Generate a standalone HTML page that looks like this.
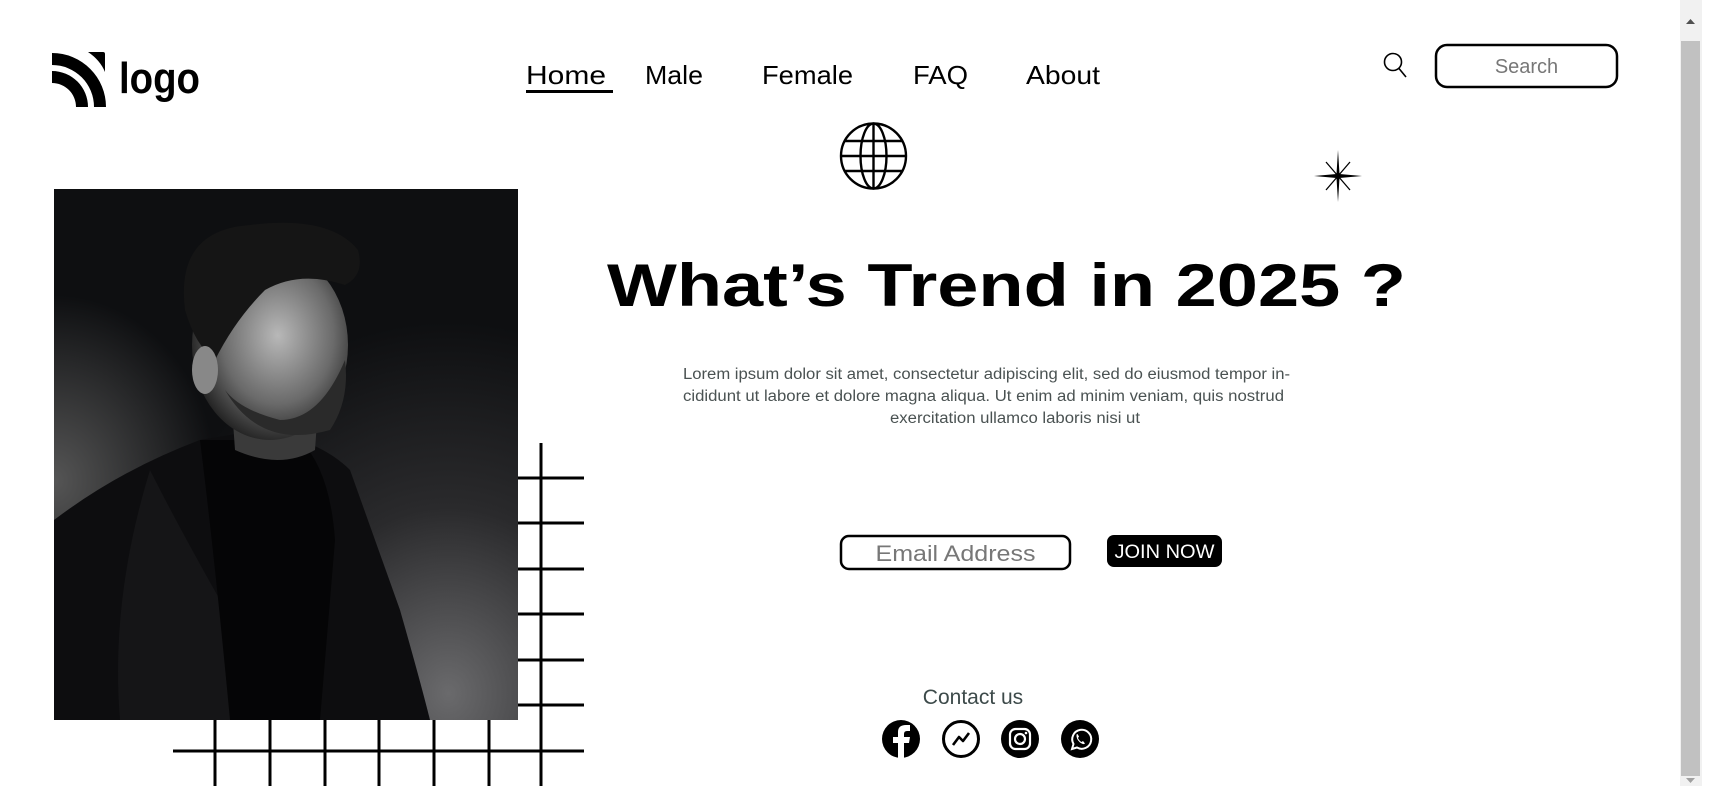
<!DOCTYPE html>
<html><head><meta charset="utf-8"><style>
html,body{margin:0;padding:0;width:1722px;height:786px;overflow:hidden;background:#fff;font-family:"Liberation Sans",sans-serif}
.abs{position:absolute}
</style></head><body>
<svg class="abs" style="left:0;top:0" width="1722" height="786" viewBox="0 0 1722 786" xmlns="http://www.w3.org/2000/svg">
<defs>
<radialGradient id="bg" cx="0.85" cy="0.95" r="0.7">
<stop offset="0" stop-color="#6a6a6c"/><stop offset="0.5" stop-color="#2a2a2c"/><stop offset="1" stop-color="#0e0f11"/>
</radialGradient>
<radialGradient id="bg2" cx="0" cy="0.55" r="0.35">
<stop offset="0" stop-color="#555"/><stop offset="1" stop-color="#555" stop-opacity="0"/>
</radialGradient>
<radialGradient id="face" cx="0.55" cy="0.45" r="0.6">
<stop offset="0" stop-color="#b8b8b8"/><stop offset="0.6" stop-color="#6a6a6a"/><stop offset="1" stop-color="#1a1a1a"/>
</radialGradient>
<clipPath id="ph"><rect x="54" y="189" width="464" height="531"/></clipPath>
</defs>

<!-- logo -->
<g fill="#000">
<path d="M52 53 A54 54 0 0 1 106 107 L94 107 A42 42 0 0 0 52 65Z"/>
<path d="M52 71 A36 36 0 0 1 88 107 L76 107 A24 24 0 0 0 52 83Z"/>
<path d="M88 52 L103 52 Q105 52 105 54 L105 72 Q100 60 88 52Z"/>
</g>
<text x="119" y="93" font-family="Liberation Sans" font-weight="700" font-size="44" textLength="81" lengthAdjust="spacingAndGlyphs">logo</text>

<!-- nav -->
<g font-family="Liberation Sans" font-size="26" fill="#000">
<text x="526" y="84" textLength="80" lengthAdjust="spacingAndGlyphs">Home</text>
<text x="645" y="84" textLength="58" lengthAdjust="spacingAndGlyphs">Male</text>
<text x="762" y="84" textLength="91" lengthAdjust="spacingAndGlyphs">Female</text>
<text x="913" y="84" textLength="55" lengthAdjust="spacingAndGlyphs">FAQ</text>
<text x="1026" y="84" textLength="74" lengthAdjust="spacingAndGlyphs">About</text>
</g>
<rect x="526" y="90" width="87" height="3" fill="#000"/>

<!-- search -->
<circle cx="1393" cy="62" r="8.5" fill="none" stroke="#000" stroke-width="1.6"/>
<line x1="1399" y1="68.5" x2="1406" y2="77" stroke="#000" stroke-width="1.6"/>
<rect x="1436" y="45" width="181" height="42" rx="11" fill="#fff" stroke="#000" stroke-width="2.5"/>
<text x="1526.5" y="73" text-anchor="middle" font-size="20" fill="#777">Search</text>

<!-- scrollbar -->
<rect x="1680" y="0" width="22" height="786" fill="#f1f1f1"/>
<rect x="1681" y="41" width="19" height="735" fill="#c1c1c1"/>
<path d="M1686 24 L1690.5 19 L1695 24Z" fill="#505050"/>
<path d="M1686 778 L1690.5 783 L1695 778Z" fill="#a0a0a0"/>

<!-- globe -->
<g fill="none" stroke="#000" stroke-width="2.4">
<circle cx="873.5" cy="156" r="32.5"/>
<ellipse cx="873.5" cy="156" rx="13" ry="32.5"/>
<line x1="873.5" y1="123.5" x2="873.5" y2="188.5"/>
<line x1="841" y1="156" x2="906" y2="156"/>
<line x1="845" y1="141" x2="902" y2="141"/>
<line x1="845" y1="171" x2="902" y2="171"/>
</g>

<!-- star -->
<path d="M1338 150 L1339.5 174 L1362 176 L1339.5 178 L1338 202 L1336.5 178 L1314 176 L1336.5 174Z" fill="#000"/>
<g stroke="#000" stroke-width="1.3"><line x1="1326" y1="162" x2="1350" y2="190"/><line x1="1350" y1="162" x2="1326" y2="190"/></g>

<!-- photo -->
<g clip-path="url(#ph)">
<rect x="54" y="189" width="464" height="531" fill="url(#bg)"/>
<rect x="54" y="189" width="464" height="531" fill="url(#bg2)"/>
<path d="M54 520 Q120 470 200 440 L260 430 Q320 440 350 470 Q375 540 400 610 Q420 680 430 720 L54 720Z" fill="#0d0d0f"/>
<path d="M150 470 Q175 520 220 600 L250 720 L120 720 Q110 600 150 470Z" fill="#151517"/>
<path d="M200 440 L300 440 Q330 470 335 540 L320 720 L230 720 Q215 560 200 440Z" fill="#050506"/>
<path d="M230 380 L320 380 L315 450 Q280 470 235 450Z" fill="#3a3a3a"/>
<ellipse cx="270" cy="345" rx="78" ry="95" fill="url(#face)"/>
<path d="M225 390 Q260 450 330 430 Q350 400 345 360 Q320 420 280 420 Q240 410 225 390Z" fill="#2a2a2a"/>
<path d="M185 310 Q175 230 250 225 Q330 215 358 250 Q365 275 345 285 Q300 270 265 290 Q235 320 215 360 Q195 345 185 310Z" fill="#151515"/>
<ellipse cx="205" cy="370" rx="13" ry="24" fill="#888"/>
</g>

<!-- grid -->
<g stroke="#000" stroke-width="3">
<line x1="541" y1="443" x2="541" y2="786"/>
<line x1="518" y1="478" x2="584" y2="478"/>
<line x1="518" y1="523" x2="584" y2="523"/>
<line x1="518" y1="569" x2="584" y2="569"/>
<line x1="518" y1="614" x2="584" y2="614"/>
<line x1="518" y1="660" x2="584" y2="660"/>
<line x1="518" y1="705" x2="584" y2="705"/>
<line x1="173" y1="751" x2="584" y2="751"/>
<line x1="215" y1="720" x2="215" y2="786"/>
<line x1="270" y1="720" x2="270" y2="786"/>
<line x1="325" y1="720" x2="325" y2="786"/>
<line x1="379" y1="720" x2="379" y2="786"/>
<line x1="434" y1="720" x2="434" y2="786"/>
<line x1="489" y1="720" x2="489" y2="786"/>
</g>

<!-- heading -->
<text x="607" y="306" font-family="Liberation Sans" font-weight="700" font-size="60" textLength="799" lengthAdjust="spacingAndGlyphs">What’s Trend in 2025 ?</text>

<!-- paragraph -->
<g font-family="Liberation Sans" font-size="15.5" fill="#4a5252">
<text x="683" y="379" textLength="607" lengthAdjust="spacingAndGlyphs">Lorem ipsum dolor sit amet, consectetur adipiscing elit, sed do eiusmod tempor in-</text>
<text x="683" y="401" textLength="601" lengthAdjust="spacingAndGlyphs">cididunt ut labore et dolore magna aliqua. Ut enim ad minim veniam, quis nostrud</text>
<text x="890" y="423" textLength="250" lengthAdjust="spacingAndGlyphs">exercitation ullamco laboris nisi ut</text>
</g>

<!-- email / join -->
<rect x="841" y="536" width="229" height="33" rx="8" fill="#fff" stroke="#000" stroke-width="2.5"/>
<text x="955.5" y="561" text-anchor="middle" font-size="22" fill="#777" textLength="160" lengthAdjust="spacingAndGlyphs">Email Address</text>
<rect x="1107" y="535" width="115" height="32" rx="7" fill="#000"/>
<text x="1164.5" y="558" text-anchor="middle" font-size="19" fill="#fff" textLength="100" lengthAdjust="spacingAndGlyphs">JOIN NOW</text>

<!-- contact -->
<text x="973" y="704" text-anchor="middle" font-size="21" fill="#3d4a4a">Contact us</text>
<circle cx="901" cy="739" r="19" fill="#000"/>
<path d="M898 758 L898 743 L893 743 L893 737 L898 737 L898 732 Q898 725 906 725 L910 725 L910 731 L907 731 Q904 731 904 734 L904 737 L910 737 L909 743 L904 743 L904 758Z" fill="#fff"/>
<circle cx="961" cy="739" r="17.5" fill="none" stroke="#000" stroke-width="3"/>
<path d="M953 745 L959 737 L963 741 L969 733" fill="none" stroke="#000" stroke-width="2.6" stroke-linejoin="round"/>
<circle cx="1020" cy="739" r="19" fill="#000"/>
<rect x="1010" y="729" width="20" height="20" rx="5.5" fill="none" stroke="#fff" stroke-width="2.2"/>
<circle cx="1020" cy="739" r="5" fill="none" stroke="#fff" stroke-width="2.2"/>
<circle cx="1026" cy="733" r="1.3" fill="#fff"/>
<circle cx="1080" cy="739" r="19" fill="#000"/>
<path d="M1072 749 L1073.5 744 A9.5 9.5 0 1 1 1077 747.5Z" fill="none" stroke="#fff" stroke-width="2"/>
<path d="M1076.5 734.5 Q1076 739 1080 742.5 Q1083.5 745 1085 743.5 L1083 741 L1081.5 742 Q1079 740.5 1078 738 L1079 736.5 L1077.5 734Z" fill="#fff"/>
</svg>
</body></html>
